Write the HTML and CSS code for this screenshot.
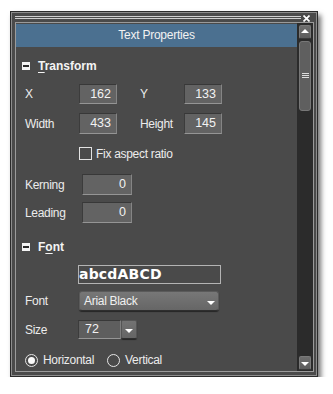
FILE: index.html
```html
<!DOCTYPE html>
<html lang="en">
<head>
    <meta charset="UTF-8">
    <meta name="viewport" content="width=device-width, initial-scale=1.0">
    <title>Text Properties</title>
    <link rel="stylesheet" href="styles.css">
</head>
<body>
    <div class="window">
        <div class="titlebar">
            <span class="grip"></span>
            <svg class="close" width="7" height="7" viewBox="0 0 7 7"><path d="M0.5 0.5L6.5 6.5M6.5 0.5L0.5 6.5" stroke="#fff" stroke-width="1.7"/></svg>
        </div>
        <div class="panel">
            <div class="content">
                <div class="header">Text Properties</div>

                <div class="section-title first"><span class="toggle"></span><span><u>T</u>ransform</span></div>
                <div class="row row-xy">
                    <span class="label w54">X</span>
                    <input class="field w38" type="text" value="162">
                    <span class="label second">Y</span>
                    <input class="field w38" type="text" value="133">
                </div>
                <div class="row row-wh">
                    <span class="label w54">Width</span>
                    <input class="field w38" type="text" value="433">
                    <span class="label second">Height</span>
                    <input class="field w38" type="text" value="145">
                </div>
                <label class="row check-row">
                    <span class="checkbox"></span>
                    <span class="label">Fix aspect ratio</span>
                </label>
                <div class="row row-kern">
                    <span class="label w57">Kerning</span>
                    <input class="field w50" type="text" value="0">
                </div>
                <div class="row row-lead">
                    <span class="label w57">Leading</span>
                    <input class="field w50" type="text" value="0">
                </div>

                <div class="section-title font-title"><span class="toggle"></span><span>F<u>o</u>nt</span></div>
                <div class="preview">abcdABCD</div>
                <div class="row row-font">
                    <span class="label w54">Font</span>
                    <div class="dropdown">Arial Black<span class="arrow"></span></div>
                </div>
                <div class="row row-size">
                    <span class="label w53">Size</span>
                    <input class="field size-field" type="text" value="72">
                    <span class="size-btn"><span class="arrow"></span></span>
                </div>
                <div class="row row-radio">
                    <span class="radio checked"></span><span class="label">Horizontal</span>
                    <span class="radio second-radio"></span><span class="label">Vertical</span>
                </div>
            </div>
            <div class="scrollbar">
                <span class="sb-btn up"></span>
                <span class="thumb"><span class="thumb-grip"></span></span>
                <span class="sb-space"></span>
                <span class="sb-btn down"></span>
            </div>
        </div>
    </div>
</body>
</html>
```

FILE: styles.css
```css
* {
    box-sizing: border-box;
}

body {
    margin: 0;
    background-color: #fff;
    font-family: "Liberation Sans", Arial, sans-serif;
    font-size: 12px;
    color: #ececec;
}

.window {
    margin: 11px 0 0 10px;
    width: 308px;
    height: 366px;
    background-color: #4a4a4a;
    border: 1px solid #2a2a2a;
    box-shadow: inset 0 0 0 1px #8c8c8c, 3px 4px 5px rgba(0, 0, 0, 0.55);
    padding: 0 3px 4px 4px;
    display: flex;
    flex-direction: column;
}

/* title strip with grip lines and close cross */
.titlebar {
    height: 10px;
    display: flex;
    align-items: flex-start;
}
.grip {
    flex: 1;
    height: 3px;
    margin-top: 4px;
    border-top: 1px solid #cfcfcf;
    border-bottom: 1px solid #cfcfcf;
}
.close {
    margin: 3px 4px 0 2px;
}

.panel {
    flex: 1;
    display: flex;
    border: 1px solid #9a9a9a;
    background-color: #4a4a4a;
}

.content {
    flex: 1;
    display: flex;
    flex-direction: column;
    padding-left: 9px;
}

.header {
    margin: 1px 0 0 -9px;
    height: 23px;
    line-height: 23px;
    background-color: #4b7090;
    color: #f2f2f2;
    text-align: center;
    letter-spacing: -0.25px;
}

.section-title {
    height: 14px;
    line-height: 14px;
    margin-left: -3px;
    display: flex;
    align-items: center;
    gap: 8px;
    font-weight: bold;
    color: #f4f4f4;
}
.section-title.first {
    margin-top: 12px;
}
.section-title.font-title {
    margin-top: 17px;
}
.section-title u {
    text-underline-offset: 2px;
}

.toggle {
    position: relative;
    width: 8px;
    height: 8px;
    background-color: #f4f4f4;
}
.toggle::after {
    content: "";
    position: absolute;
    left: 1px;
    top: 3px;
    width: 6px;
    height: 2px;
    background-color: #2a2a2a;
}

.row {
    display: flex;
    align-items: center;
}

.label {
    letter-spacing: -0.3px;
    white-space: nowrap;
}
.w53 { width: 53px; }
.w54 { width: 54px; }
.w57 { width: 57px; }
.label.second {
    margin-left: 23px;
    width: 44px;
}

.field {
    height: 100%;
    margin: 0;
    padding: 0 5px 1px 0;
    background-color: #636363;
    border: 1px solid;
    border-color: #383838 #858585 #959595 #3c3c3c;
    font-family: "Liberation Sans", Arial, sans-serif;
    font-size: 12.5px;
    color: #f2f2f2;
    text-align: right;
}
.w38 { width: 38px; }
.w50 { width: 50px; }

.row-xy { margin-top: 11px; height: 20px; }
.row-wh { margin-top: 9px; height: 21px; }
.row-kern { margin-top: 14px; height: 21px; }
.row-lead { margin-top: 7px; height: 21px; }

.check-row {
    margin-top: 13px;
    height: 13px;
    padding-left: 54px;
    gap: 4px;
}
.checkbox {
    width: 13px;
    height: 13px;
    border: 1px solid #e2e2e2;
}

.preview {
    margin: 11px 0 0 53px;
    width: 143px;
    height: 19px;
    border: 1px solid #b4b4b4;
    font-family: "DejaVu Sans", sans-serif;
    font-weight: bold;
    font-size: 14px;
    line-height: 17px;
    color: #fff;
    letter-spacing: 0.2px;
}

.row-font { margin-top: 7px; height: 20px; }
.dropdown {
    position: relative;
    width: 140px;
    height: 100%;
    padding: 2px 0 0 4px;
    border-radius: 3px;
    background: linear-gradient(#777, #666);
    border: 1px solid #5a5a5a;
    border-bottom-color: #2e2e2e;
    box-shadow: 0 1px 1px rgba(0, 0, 0, 0.5);
    letter-spacing: -0.3px;
    color: #f0f0f0;
}
.arrow {
    position: absolute;
    width: 0;
    height: 0;
    border-left: 4px solid transparent;
    border-right: 4px solid transparent;
    border-top: 4px solid #fff;
}
.dropdown .arrow {
    right: 3px;
    top: 9px;
}

.row-size { margin-top: 9px; height: 19px; }
.size-field {
    width: 43px;
    text-align: left;
    padding: 0 0 2px 6px;
    background-color: #5e5e5e;
}
.size-btn {
    position: relative;
    width: 16px;
    height: 100%;
    border-radius: 2px;
    background: linear-gradient(#737373, #656565);
    border: 1px solid #555;
    border-bottom-color: #2e2e2e;
    box-shadow: 0 1px 1px rgba(0, 0, 0, 0.5);
}
.size-btn .arrow {
    left: 3px;
    top: 8px;
}

.row-radio {
    margin-top: 15px;
    height: 12px;
}
.radio {
    position: relative;
    width: 13px;
    height: 13px;
    margin-right: 5px;
    border: 1px solid #e6e6e6;
    border-radius: 50%;
}
.radio.checked::after {
    content: "";
    position: absolute;
    left: 2px;
    top: 2px;
    width: 7px;
    height: 7px;
    border-radius: 50%;
    background-color: #fafafa;
}
.second-radio {
    margin-left: 13px;
}

/* scrollbar column */
.scrollbar {
    width: 16px;
    background-color: #2b2b2b;
    display: flex;
    flex-direction: column;
    padding: 2px 2px 1px 2px;
}
.sb-btn {
    position: relative;
    height: 14px;
    flex-shrink: 0;
    border-radius: 2px;
    background: linear-gradient(#6e6e6e, #5c5c5c);
    border: 1px solid #7a7a7a;
    border-bottom-color: #3a3a3a;
}
.sb-btn::after {
    content: "";
    position: absolute;
    left: 1px;
    width: 0;
    height: 0;
    border-left: 4px solid transparent;
    border-right: 4px solid transparent;
}
.sb-btn.up::after {
    top: 3px;
    border-bottom: 4px solid #fff;
}
.sb-btn.down::after {
    top: 5px;
    border-top: 4px solid #fff;
}
.thumb {
    position: relative;
    margin-top: 2px;
    height: 70px;
    flex-shrink: 0;
    border-radius: 3px;
    background-color: #5f5f5f;
    border: 1px solid #777;
}
.thumb-grip {
    position: absolute;
    left: 2px;
    top: 31px;
    width: 7px;
    height: 5px;
    border-top: 1px solid #ddd;
    border-bottom: 1px solid #ddd;
}
.thumb-grip::after {
    content: "";
    position: absolute;
    left: 0;
    top: 1px;
    width: 7px;
    height: 1px;
    background-color: #ddd;
}
.sb-space {
    flex: 1;
}
```
